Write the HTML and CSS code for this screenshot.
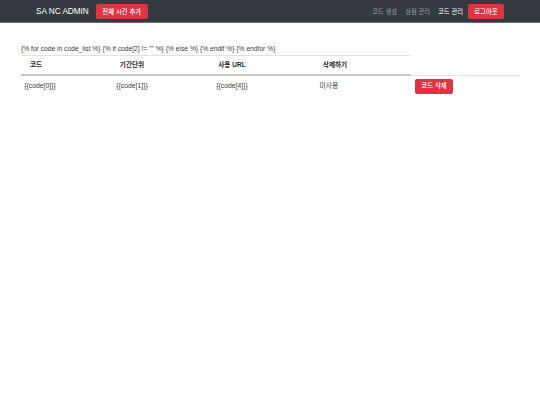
FILE: index.html
```html
<!DOCTYPE html>
<html lang="ko">
<head>
<meta charset="utf-8">
<title>SA NC ADMIN</title>
<link rel="stylesheet" href="styles.css">
</head>
<body>
<nav class="navbar">
  <div class="nav-left">
    <span class="brand">SA NC ADMIN</span>
    <a class="btn btn-red btn-add">전체 시간 추가</a>
  </div>
  <div class="nav-right">
    <a class="nav-link">코드 생성</a>
    <a class="nav-link">상점 관리</a>
    <a class="nav-link active">코드 관리</a>
    <a class="btn btn-red btn-logout">로그아웃</a>
  </div>
</nav>
<main class="content">
  <p class="template">{% for code in code_list %} {% if code[2] != "" %} {% else %} {% endif %} {% endfor %}</p>
  <table class="code-table">
    <thead>
      <tr>
        <th class="c1">코드</th>
        <th class="c2">기간단위</th>
        <th class="c3">사용 URL</th>
        <th class="c4">삭제하기</th>
      </tr>
    </thead>
    <tbody>
      <tr>
        <td class="c1">{{code[0]}}</td>
        <td class="c2">{{code[1]}}</td>
        <td class="c3">{{code[4]}}</td>
        <td class="c4">미사용</td>
        <td class="c5"><a class="btn btn-red btn-del">코드 삭제</a></td>
      </tr>
    </tbody>
  </table>
</main>
</body>
</html>
```
FILE: styles.css
```css
html, body {
  margin: 0;
  padding: 0;
  background: #ffffff;
}
body {
  font-family: "Liberation Sans", "Noto Sans CJK KR", Arial, sans-serif;
  color: #3a3d40;
  font-size: 7px;
}
.navbar {
  height: 23px;
  background: #343a40;
  display: flex;
  align-items: center;
  justify-content: space-between;
  padding: 0 36px;
  border-bottom: 1px solid #6c7075;
  box-sizing: border-box;
}
.nav-left, .nav-right {
  display: flex;
  align-items: center;
}
.brand {
  color: #ffffff;
  font-size: 8.2px;
  margin-right: 7px;
}
.btn {
  display: inline-flex;
  align-items: center;
  justify-content: center;
  height: 15px;
  padding: 0 4px;
  border-radius: 2px;
  color: #ffffff;
  font-family: "Noto Sans CJK KR", "Liberation Sans", sans-serif;
  font-size: 6.4px;
  font-weight: 500;
  box-sizing: border-box;
  white-space: nowrap;
}
.btn-red {
  background: #dc3545;
}
.btn-add { width: 52px; }
.btn-logout { width: 36px; }
.btn-del { width: 38px; }
.nav-link {
  font-family: "Noto Sans CJK KR", "Liberation Sans", sans-serif;
  color: #9a9da0;
  font-size: 6.3px;
  margin-right: 8px;
}
.nav-link.active {
  color: #ffffff;
  margin-right: 5px;
}
.content {
  padding: 21px 0 0 21px;
}
.template {
  margin: 0 0 1px 0;
  line-height: 10px;
  font-size: 6.7px;
}
.code-table {
  width: 499px;
  border-collapse: collapse;
  table-layout: fixed;
}
.code-table th,
.code-table td {
  box-sizing: border-box;
}
.code-table th {
  font-weight: bold;
  font-size: 6.6px;
  line-height: 10px;
  padding: 4px 0;
  text-align: center;
  border-top: 1px solid #dee2e6;
  border-bottom: 2px solid #c6c9cc;
  color: #26292c;
}
.code-table td {
  font-size: 6.8px;
  line-height: 10px;
  padding: 3px 0;
  text-align: center;
  border-top: 1px solid #dee2e6;
  height: 21px;
}
.code-table .c1 { width: 38px; }
.code-table .c2 { width: 146px; }
.code-table .c3 { width: 54px; }
.code-table .c4 { width: 152px; }
.code-table th.c1 { padding-right: 8px; }
.code-table td.c4 { padding-right: 12px; }
.code-table td.c5 {
  width: 109px;
  text-align: left;
  padding-left: 4px;
}
.code-table td.c5 .btn {
  vertical-align: middle;
}
```
